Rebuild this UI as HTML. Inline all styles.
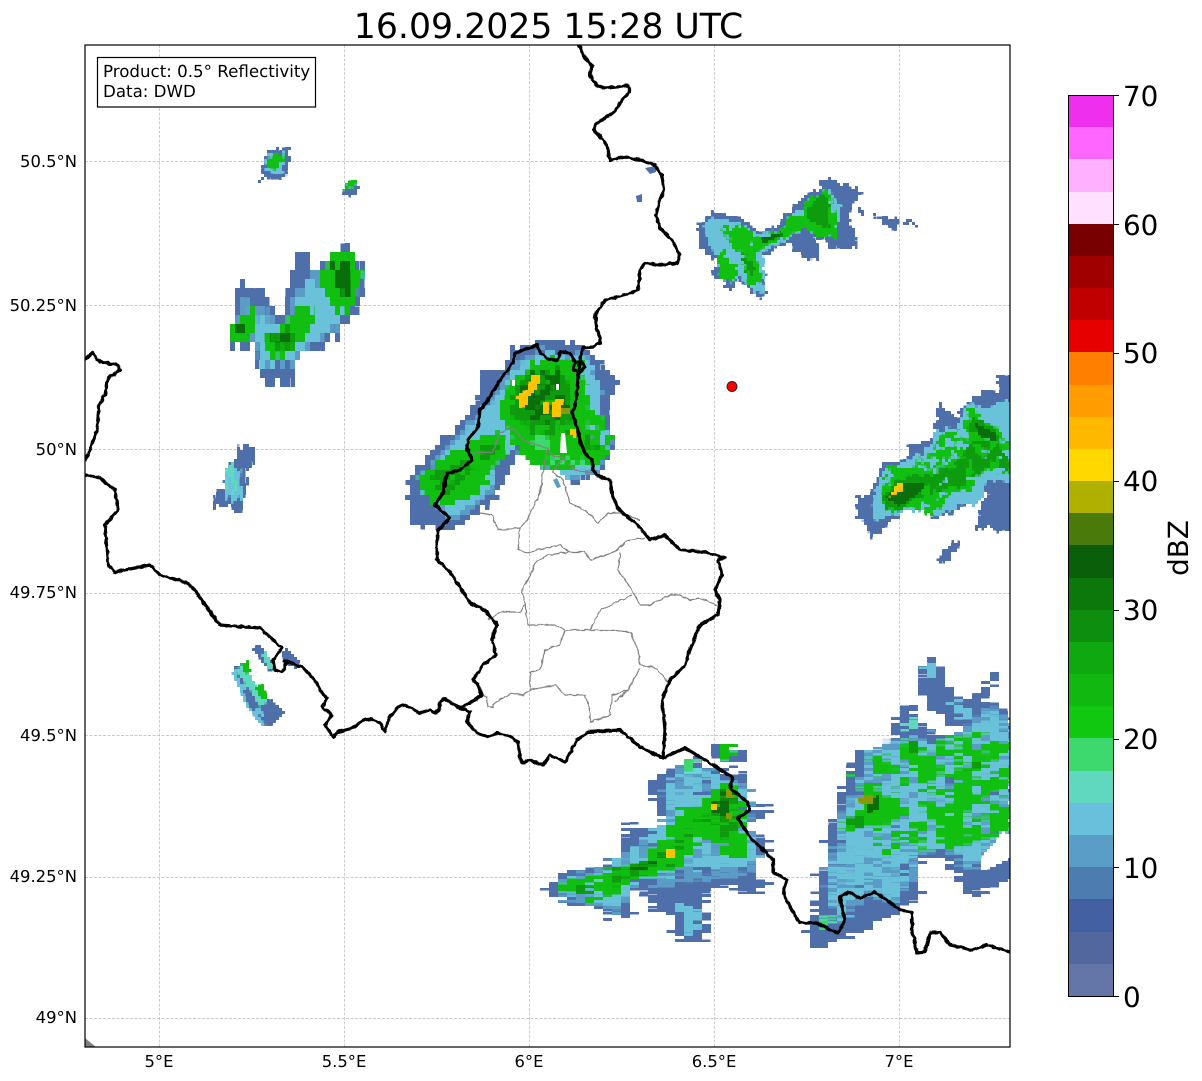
<!DOCTYPE html>
<html><head><meta charset="utf-8"><title>Radar</title>
<style>
html,body{margin:0;padding:0;background:#fff}
svg{display:block}
text{font-family:"DejaVu Sans","Liberation Sans",sans-serif;fill:#000;text-rendering:geometricPrecision}
.t{font-size:16.4px}
.c{font-size:27.8px}
.b{fill:#4e6fa9}.m{fill:#5a9cc6}.l{fill:#69c2da}.q{fill:#5fd8bf}
.g{fill:#10bf10}.a{fill:#3dd86e}.h{fill:#0e9c0e}.d{fill:#0a6e0a}.y{fill:#ffc400}.o{fill:#8a9a06}
.w{fill:#fff}
</style></head><body>
<svg width="1202" height="1081" viewBox="0 0 1202 1081" xmlns="http://www.w3.org/2000/svg">
<defs>
<clipPath id="ax"><rect x="85" y="45" width="925" height="1002"/></clipPath>
<filter id="fD" filterUnits="userSpaceOnUse" x="0" y="0" width="1202" height="1081" color-interpolation-filters="sRGB">
<feTurbulence type="fractalNoise" baseFrequency="0.14" numOctaves="2" seed="4" result="n"/>
<feDisplacementMap in="SourceGraphic" in2="n" scale="12" xChannelSelector="R" yChannelSelector="G"/>
</filter>
<filter id="fH" filterUnits="userSpaceOnUse" x="0" y="0" width="1202" height="1081" color-interpolation-filters="sRGB">
<feTurbulence type="fractalNoise" baseFrequency="0.035 0.28" numOctaves="2" seed="7" result="n"/>
<feDisplacementMap in="SourceGraphic" in2="n" scale="20" xChannelSelector="R" yChannelSelector="G"/>
</filter>
<filter id="fV" filterUnits="userSpaceOnUse" x="0" y="0" width="1202" height="1081" color-interpolation-filters="sRGB">
<feTurbulence type="fractalNoise" baseFrequency="0.25 0.04" numOctaves="2" seed="3" result="n"/>
<feDisplacementMap in="SourceGraphic" in2="n" scale="16" xChannelSelector="R" yChannelSelector="G"/>
</filter>
<filter id="fL" filterUnits="userSpaceOnUse" x="0" y="0" width="1202" height="1081" color-interpolation-filters="sRGB">
<feTurbulence type="fractalNoise" baseFrequency="0.22" numOctaves="1" seed="9" result="n"/>
<feDisplacementMap in="SourceGraphic" in2="n" scale="3.5" xChannelSelector="R" yChannelSelector="G"/>
</filter>
<!-- block mosaics -->
<filter id="p3" filterUnits="userSpaceOnUse" x="0" y="0" width="1202" height="1081" color-interpolation-filters="sRGB">
<feFlood x="1" y="1" width="1" height="1"/><feComposite x="0" y="0" width="3" height="3"/><feTile result="a"/>
<feComposite in="SourceGraphic" in2="a" operator="in"/><feMorphology operator="dilate" radius="1"/>
<feColorMatrix values="1 0 0 0 0 0 1 0 0 0 0 0 1 0 0 0 0 0 20 -9"/>
</filter>
<filter id="p5" filterUnits="userSpaceOnUse" x="0" y="0" width="1202" height="1081" color-interpolation-filters="sRGB">
<feFlood x="2" y="2" width="1" height="1"/><feComposite x="0" y="0" width="5" height="5"/><feTile result="a"/>
<feComposite in="SourceGraphic" in2="a" operator="in"/><feMorphology operator="dilate" radius="2"/>
<feColorMatrix values="1 0 0 0 0 0 1 0 0 0 0 0 1 0 0 0 0 0 20 -9"/>
</filter>
<filter id="pH" filterUnits="userSpaceOnUse" x="0" y="0" width="1202" height="1081" color-interpolation-filters="sRGB">
<feFlood x="4" y="1" width="1" height="1"/><feComposite x="0" y="0" width="9" height="3"/><feTile result="a"/>
<feComposite in="SourceGraphic" in2="a" operator="in"/><feMorphology operator="dilate" radius="4 1"/>
<feColorMatrix values="1 0 0 0 0 0 1 0 0 0 0 0 1 0 0 0 0 0 20 -9"/>
</filter>
<filter id="pV" filterUnits="userSpaceOnUse" x="0" y="0" width="1202" height="1081" color-interpolation-filters="sRGB">
<feFlood x="2" y="4" width="1" height="1"/><feComposite x="0" y="0" width="5" height="9"/><feTile result="a"/>
<feComposite in="SourceGraphic" in2="a" operator="in"/><feMorphology operator="dilate" radius="2 4"/>
<feColorMatrix values="1 0 0 0 0 0 1 0 0 0 0 0 1 0 0 0 0 0 20 -9"/>
</filter>
<!-- holes: keep part of a layer according to thresholded noise -->
<filter id="hL" filterUnits="userSpaceOnUse" x="0" y="0" width="1202" height="1081" color-interpolation-filters="sRGB">
<feTurbulence type="fractalNoise" baseFrequency="0.07 0.12" numOctaves="2" seed="11"/>
<feColorMatrix values="0 0 0 0 0 0 0 0 0 0 0 0 0 0 0 25 0 0 0 -10.500" result="k"/>
<feComposite in="SourceGraphic" in2="k" operator="in"/>
</filter>
<filter id="hG" filterUnits="userSpaceOnUse" x="0" y="0" width="1202" height="1081" color-interpolation-filters="sRGB">
<feTurbulence type="fractalNoise" baseFrequency="0.09" numOctaves="2" seed="21"/>
<feColorMatrix values="0 0 0 0 0 0 0 0 0 0 0 0 0 0 0 25 0 0 0 -9.500" result="k"/>
<feComposite in="SourceGraphic" in2="k" operator="in"/>
</filter>
<filter id="hP" filterUnits="userSpaceOnUse" x="0" y="0" width="1202" height="1081" color-interpolation-filters="sRGB">
<feTurbulence type="fractalNoise" baseFrequency="0.04 0.07" numOctaves="2" seed="5"/>
<feColorMatrix values="0 0 0 0 0 0 0 0 0 0 0 0 0 0 0 25 0 0 0 -12.750" result="k"/>
<feComposite in="SourceGraphic" in2="k" operator="in"/>
</filter>
</defs>

<text x="548.500" y="38" text-anchor="middle" style="font-size:34.7px">16.09.2025 15:28 UTC</text>

<!-- grid -->
<g stroke="#b8b8b8" stroke-width="0.7" stroke-dasharray="3 1.5" fill="none">
<path d="M159.500 45V1047M344.500 45V1047M529.500 45V1047M714.500 45V1047M899.500 45V1047"/>
<path d="M85 161.500H1010M85 305.500H1010M85 449.500H1010M85 593.500H1010M85 735.500H1010M85 877.500H1010M85 1018.500H1010"/>
</g>

<g clip-path="url(#ax)">
<!-- central cell -->
<g filter="url(#p5)"><g filter="url(#fD)">
<polygon class="b" points="408,483 433,447 453,430 477,400 483,367 500,373 513,347 550,340 583,344 600,363 620,382 608,400 613,447 603,473 573,482 533,462 523,445 500,490 480,513 450,530 410,523"/>
<polygon class="m" points="415,487 434,460 480,412 498,390 513,362 543,350 585,354 602,385 598,405 612,443 600,472 570,480 533,462 517,445 497,465 495,490 455,522 428,500"/>
<polygon class="l" points="420,487 437,463 480,417 500,393 513,370 543,353 583,358 600,387 597,405 610,443 597,470 570,477 533,460 517,443 493,463 493,487 453,517 430,497"/>
<polygon class="g" points="500,402 515,375 547,357 582,361 592,397 612,437 602,466 567,470 533,463 510,440"/>
<polygon class="g" points="416,478 445,456 480,438 505,428 505,455 490,470 480,496 445,506 428,499"/>
<g filter="url(#hG)"><polygon class="h" points="510,397 527,373 557,365 572,390 576,417 566,437 533,437 513,420"/>
<polygon class="h" points="432,478 463,458 478,470 447,494"/>
<polygon class="h" points="478,447 497,441 497,455 480,462"/>
<polygon class="h" points="585,430 600,445 595,455 583,445"/></g>
<g filter="url(#hL)"><polygon class="d" points="520,392 532,372 556,370 566,392 570,412 555,424 530,420"/></g>
<g filter="url(#hP)"><polygon class="l" points="585,380 600,395 605,440 595,455 585,420"/><polygon class="a" points="520,435 560,440 590,465 550,462"/></g>
</g></g>
<g filter="url(#p3)">
<polygon class="y" points="517,397 528,388 532,376 541,376 536,390 529,396 528,406 520,407"/>
<polygon class="y" points="553,401 563,399 561,414 557,418 553,416"/>
<polygon class="y" points="544,401 550,401 550,413 544,413"/>
<polygon class="y" points="570,427 578,433 576,438 571,434"/>
<polygon class="o" points="562,408 570,408 570,413 562,413"/>
</g>
<polygon class="w" points="561,433 565,433 567,453 560,453"/>
<polygon class="w" points="512,380 515,380 515,386 512,386"/>
<polygon class="w" points="556,384 559,384 559,390 556,390"/>
<polygon class="m" points="553,480 557,478 561,487 557,488"/>

<!-- north-west small -->
<g filter="url(#p3)"><g filter="url(#fD)">
<polygon class="b" points="258,180 268,152 290,146 290,165 282,180 265,178"/>
<polygon class="l" points="264,172 270,155 285,152 282,172"/>
<polygon class="g" points="267,168 273,154 284,155 279,170"/>
<polygon class="b" points="343,198 345,180 362,185 355,195"/>
<polygon class="g" points="344,190 348,180 356,182 352,192"/>
</g></g>

<!-- left cell -->
<g filter="url(#pV)"><g filter="url(#fV)">
<polygon class="b" points="233,347 238,280 250,288 263,290 270,310 283,320 287,297 293,258 305,250 310,270 327,263 348,241 365,270 365,290 349,323 335,342 315,354 295,352 294,384 265,382 253,347"/>
<polygon class="m" points="235,340 243,300 263,312 283,325 290,300 307,280 330,262 354,252 360,277 352,307 332,332 309,348 292,364 265,370 255,342"/>
<polygon class="l" points="235,337 243,313 263,320 280,327 290,307 307,290 330,270 352,260 358,277 350,307 330,330 307,345 290,360 263,367 257,340"/>
<polygon class="g" points="318,285 329,256 352,249 362,280 352,311 333,316 326,292"/>
<polygon class="g" points="284,317 297,301 318,313 308,337 287,354 273,370 264,333 286,326"/>
<polygon class="g" points="231,323 255,311 259,323 247,341 231,342"/>
<polygon class="d" points="331,263 352,263 356,287 345,302 333,277"/>
<polygon class="h" points="268,333 294,326 294,347 275,349"/>
<polygon class="d" points="270,335 290,331 288,345 275,345"/>
<polygon class="d" points="236,322 244,322 244,334 236,334"/>
</g></g>

<!-- north-east cell -->
<g filter="url(#p3)"><g filter="url(#fD)">
<polygon class="b" points="697,228 712,212 743,218 760,232 780,223 787,212 800,202 830,178 863,193 847,213 858,247 837,250 817,237 820,263 803,257 787,243 762,257 768,295 758,297 740,280 730,290 712,273 717,263 700,245"/>
<polygon class="l" points="703,225 713,218 740,223 758,235 783,230 790,218 807,203 830,190 840,207 838,235 818,237 803,228 787,240 763,252 765,292 758,293 743,277 730,283 717,270 713,250 707,237"/>
<polygon class="g" points="721,228 740,225 760,238 783,228 787,218 803,215 807,200 828,191 837,213 837,237 820,237 803,227 783,239 763,249 755,250 762,282 750,285 740,265 732,282 721,282 715,257 731,243"/>
<g filter="url(#hP)"><polygon class="l" points="725,235 755,245 750,270 725,270"/></g>
<polygon class="h" points="805,210 823,193 832,203 828,227 813,225"/>
<polygon class="h" points="742,250 754,262 752,278 745,270"/>
<polygon class="d" points="760,238 780,232 783,238 763,243"/>
<polygon class="b" points="850,200 866,212 862,214 848,203"/>
<polygon class="b" points="873,213 900,222 893,230 883,223"/>
<polygon class="b" points="907,220 918,227 916,229 906,222"/>
</g></g>
<polygon class="b" points="645,168 656,166 656,172 650,174"/>
<polygon class="b" points="636,196 642,194 642,202 637,202"/>

<!-- east cell -->
<g filter="url(#p3)"><g filter="url(#fD)">
<polygon class="b" points="853,502 873,492 882,463 908,457 910,445 933,438 938,407 945,407 955,420 968,402 983,390 998,390 998,375 1015,375 1015,537 1003,530 975,527 987,490 953,513 937,520 923,510 900,513 882,530 873,538 860,518"/>
<polygon class="l" points="873,503 883,470 910,460 930,447 935,430 957,427 968,403 987,408 1015,397 1015,483 987,480 977,507 963,503 940,517 923,510 900,513 877,520"/>
<g filter="url(#hL)"><polygon class="g" points="882,498 885,467 910,467 933,450 937,433 962,430 968,405 997,427 1015,447 1015,477 983,470 970,490 950,493 937,517 925,513 917,507 897,513 882,510"/></g>
<polygon class="g" points="885,495 890,470 915,468 932,470 940,500 915,505 895,510"/>
<g filter="url(#hG)">
<polygon class="h" points="882,497 900,478 927,476 955,462 975,440 1000,440 1012,470 985,468 965,485 943,490 920,497 900,510 885,507"/>
</g>
<polygon class="h" points="968,427 973,417 997,430 997,442 980,437"/>
<polygon class="b" points="939,558 953,540 959,547 947,563"/>
</g></g>
<g filter="url(#p3)">
<polygon class="d" points="885,498 900,484 925,484 918,494 900,506"/>
<polygon class="d" points="975,423 995,433 995,441 980,436"/>
<polygon class="y" points="889,498 898,483 903,482 903,490 893,495"/>
</g>

<!-- small mid-left -->
<g filter="url(#p3)"><g filter="url(#fV)">
<polygon class="b" points="214,492 225,490 227,465 242,443 252,445 253,468 246,470 246,495 240,512 222,505 214,508"/>
<polygon class="l" points="228,465 240,470 243,495 232,505 225,490"/>
<polygon class="q" points="226,462 232,462 238,490 233,495"/>
</g></g>

<!-- south-west strip -->
<g filter="url(#p3)">
<polygon class="l" points="232,672 241,665 258,692 282,716 262,727 246,705"/>
<g filter="url(#hL)"><polygon class="b" points="234,665 240,660 258,690 285,712 268,728 248,705"/></g>
<polygon class="q" points="236,670 246,662 252,680 268,700 262,710 250,690"/>
<polygon class="g" points="241,664 248,661 251,672 245,675"/>
<polygon class="g" points="255,688 262,684 268,698 260,698"/>
<polygon class="b" points="253,650 259,644 275,666 270,672"/>
<polygon class="q" points="262,655 266,652 274,668 269,670"/>
<polygon class="b" points="281,655 287,648 300,662 296,668 290,666"/>
<polygon class="b" points="260,706 272,700 281,714 268,727"/>
</g>

<!-- south cell -->
<g filter="url(#pH)"><g filter="url(#fH)">
<polygon class="b" points="542,890 563,873 597,867 623,853 625,825 657,828 670,823 653,803 648,787 663,772 680,767 680,758 697,757 713,770 750,773 743,803 777,813 743,827 770,847 757,857 757,880 767,887 750,893 723,887 703,890 705,917 713,930 703,942 673,938 677,917 650,910 653,893 633,893 630,920 590,907 550,897"/>
<polygon class="b" points="707,748 720,742 743,750 743,762 720,763"/>
<g filter="url(#hG)"><polygon class="m" points="550,890 567,875 597,872 617,855 630,850 657,830 667,812 663,790 670,775 690,760 697,768 723,775 750,785 752,827 760,860 740,878 697,880 673,885 637,885 620,912 590,905 565,897"/></g>
<g filter="url(#hL)"><polygon class="l" points="550,890 567,877 597,877 617,857 630,853 657,833 667,817 663,797 670,780 690,763 697,772 723,777 743,787 747,827 757,857 737,870 697,870 673,877 637,877 620,907 590,900 565,895"/></g>
<polygon class="l" points="677,903 697,907 703,933 687,933"/>
<polygon class="g" points="552,890 567,878 590,876 596,902 580,895"/>
<polygon class="g" points="598,873 623,868 647,856 665,835 678,811 703,801 727,778 739,793 745,807 742,830 749,859 727,859 720,845 700,839 685,859 675,872 630,879 623,892 598,899"/>
<polygon class="g" points="718,746 735,746 735,760 722,760"/>
<polygon class="a" points="682,760 695,760 695,770 682,770"/>
<g filter="url(#hG)">
<polygon class="h" points="610,875 630,867 657,857 673,843 687,827 710,810 727,787 738,803 733,827 723,843 717,827 700,823 687,843 670,863 643,873 615,885"/>
<polygon class="h" points="575,885 590,880 594,897 580,895"/>
</g>
<polygon class="d" points="630,870 655,862 668,850 650,870"/>
<polygon class="d" points="708,812 730,790 734,800 728,815"/>
</g></g>
<g filter="url(#p3)">
<polygon class="y" points="667,849 676,849 676,857 667,857"/>
<polygon class="y" points="710,803 717,803 717,811 710,811"/>
<polygon class="o" points="725,813 732,813 732,818 725,818"/>
<polygon class="o" points="725,790 732,790 734,798 727,798"/>
</g>

<!-- south-east large cell -->
<g filter="url(#pH)"><g filter="url(#fH)">
<polygon class="b" points="808,930 813,907 818,877 827,870 827,840 832,822 843,787 858,750 890,747 895,715 913,705 922,730 937,733 967,730 947,722 930,703 918,690 922,663 940,655 943,683 970,702 995,673 993,687 980,703 997,707 1015,718 1015,878 967,897 960,880 943,860 915,863 923,892 900,910 863,930 820,947 808,938"/>
<g filter="url(#hG)"><polygon class="m" points="833,912 824,870 840,838 834,822 855,790 867,750 895,740 917,733 950,736 977,718 993,708 1015,722 1015,835 985,855 973,872 947,852 917,852 917,875 900,900 850,905 845,930"/></g>
<g filter="url(#hL)"><polygon class="l" points="833,907 828,870 843,840 837,823 857,793 870,753 897,743 917,737 950,740 977,723 993,712 1015,727 1015,827 985,850 973,867 947,847 913,847 913,870 897,897 850,900 847,923"/></g>
<polygon class="l" points="925,670 938,660 935,675 928,680"/>
<polygon class="l" points="950,700 975,712 965,722 955,715"/>
<g filter="url(#hP)"><polygon class="g" points="850,775 915,745 1015,725 1015,830 960,850 900,845 845,835"/></g>
<polygon class="g" points="868,757 885,752 892,775 875,778"/>
<polygon class="g" points="903,735 918,743 918,755 910,755"/>
<polygon class="g" points="920,763 938,757 943,773 930,788 920,783"/>
<polygon class="g" points="840,827 857,813 878,793 898,800 902,817 880,823 857,832"/>
<polygon class="g" points="950,797 973,792 978,803 960,817 950,810"/>
<polygon class="g" points="935,817 960,813 970,840 950,853 938,840"/>
<polygon class="g" points="963,740 973,747 990,763 973,772 967,763"/>
<polygon class="g" points="952,750 960,753 963,767 953,765"/>
<polygon class="g" points="980,783 1000,773 1003,787 987,795"/>
<polygon class="g" points="993,807 1015,810 1015,823 1002,823"/>
<polygon class="g" points="895,832 917,830 910,840 897,840"/>
<polygon class="g" points="883,850 897,843 897,853 883,857"/>
<polygon class="a" points="820,920 835,918 830,930 820,930"/>
<polygon class="q" points="905,720 918,718 915,730 905,732"/>
<polygon class="h" points="848,820 863,812 863,830 850,827"/>
<polygon class="h" points="908,738 916,743 916,752 910,752"/>
<polygon class="h" points="972,755 982,762 975,770 970,765"/>
</g></g>
<g filter="url(#p3)">
<polygon class="d" points="866,800 880,795 880,810 868,812"/>
<polygon class="o" points="858,798 872,795 873,803 860,803"/>
<polygon class="w" points="980,860 1003,832 1010,838 1010,858 990,868 980,872"/>
</g>

<polygon points="85,1038 96,1047 85,1047" fill="#808080"/>

<!-- province lines -->
<g fill="none" stroke="#808080" stroke-width="1.200" stroke-linejoin="round" filter="url(#fL)">
<path d="M472,453 493,452 500,433 513,428 523,440 547,448 552,455 563,458 575,470 592,473"/>
<path d="M480,513 492,515 498,530 520,528 527,520 540,493 543,472 547,448"/>
<path d="M552,472 563,480 570,503 587,512 598,523 608,513 620,513 640,520"/>
<path d="M552,472 563,458"/>
<path d="M520,528 518,550 525,553 545,548 560,545 570,552 585,552 590,560 615,552 628,540 645,538"/>
<path d="M620,552 618,570 632,590 640,605 650,605 670,595 680,595 690,600 700,598 717,605"/>
<path d="M570,552 548,555 535,563 530,575 522,590 525,605 520,612 500,612 488,620"/>
<path d="M525,605 528,625 555,625 565,630 590,630 600,610 632,595"/>
<path d="M590,630 610,630 630,632 638,650 640,665 655,668 665,678 668,682"/>
<path d="M565,630 560,645 545,650 540,670 530,672 530,690 555,685 565,695 585,695 590,710 590,722 610,715 612,695 628,690 640,668"/>
<path d="M483,695 487,698 488,707 493,707 495,702 513,693 523,695 530,690"/>
<path d="M628,690 615,702"/>
</g>

<!-- national borders -->
<g fill="none" stroke="#000" stroke-width="3.200" stroke-linejoin="round" stroke-linecap="round" filter="url(#fL)">
<path d="M579,45 585,58 592,66 590,75 596,85 605,88 628,86 630,92 622,100 614,112 596,124 594,130 605,142 608,150 610,160 625,157 640,160 655,165 662,176 664,190 660,200 656,215 660,228 672,240 680,255 678,263 660,265 645,263 640,270 638,290 622,296 605,300 595,315 597,330 598,330 600,343 593,347 583,348 580,360 575,363 573,370 580,372 585,367 580,360 578,377 577,390 575,407 572,413 577,427 580,440 585,453 592,460 593,470 597,475 610,480 612,493 617,507 627,517 638,525 650,540 665,535 680,550 705,552 725,558 718,560 722,575 715,590 720,600 718,615 700,625 690,650 685,665 670,680 662,700 665,730 663,758"/>
<path d="M575,362 570,353 560,352 558,360 550,360 540,353 537,345 515,353 513,363 500,380 490,397 480,410 478,427 468,440 467,448 472,460 460,470 447,473 443,493 435,505 450,518 438,530 437,540 437,560 450,572 462,590 470,603 485,610 497,625 492,640 496,655 483,665 473,680 478,685 482,695 470,703 460,708"/>
<path d="M85,360 92,353 100,362 118,365 120,370 108,378 105,395 99,405 97,430 90,450 85,460"/>
<path d="M85,475 100,478 115,490 118,510 105,525 108,565 115,572 135,568 150,565 160,575 185,582 195,590 205,605 220,625 245,627 260,628 282,648 273,660 275,670 282,672 287,663 285,661 302,667 315,680 322,693 327,698 322,707 332,715 325,725 333,737 338,732 353,728 363,720 372,719 380,723 385,732 389,718 398,707 403,705 412,708 419,713 430,710 435,713 439,710 440,702 445,699 460,708 470,712 467,722 477,733 488,737 497,733 510,736 518,742 520,758 523,763 530,760 543,765 550,755 565,762 577,740 588,732 620,730 640,747 663,758 685,748 697,755 733,778 730,788 747,802 750,810 738,818 750,837 773,860 773,872 787,880 783,893 792,910 800,923 817,923 838,933 845,920 840,897 848,892 860,898 875,892 887,900 900,910 912,912 912,930 917,953 925,952 930,933 940,932 950,945 972,950 987,945 1010,952"/>
</g>
</g>

<!-- station dot -->
<circle cx="732" cy="386.500" r="5" fill="#f00" stroke="#222" stroke-width="0.9"/>

<!-- legend -->
<rect x="97.500" y="57.500" width="218" height="49.500" fill="#fff" stroke="#000" stroke-width="1.200"/>
<text x="103" y="77" style="font-size:16.67px">Product: 0.5° Reflectivity</text>
<text x="103" y="97" style="font-size:16.67px">Data: DWD</text>

<rect x="85" y="45" width="925" height="1002" fill="none" stroke="#000" stroke-width="1.200"/>

<!-- axis labels -->
<g class="t" text-anchor="end">
<text x="77" y="167">50.5°N</text>
<text x="77" y="311">50.25°N</text>
<text x="77" y="455">50°N</text>
<text x="77" y="598">49.75°N</text>
<text x="77" y="741">49.5°N</text>
<text x="77" y="882">49.25°N</text>
<text x="77" y="1023">49°N</text>
</g>
<g class="t" text-anchor="middle">
<text x="159" y="1067">5°E</text>
<text x="344" y="1067">5.5°E</text>
<text x="529" y="1067">6°E</text>
<text x="714" y="1067">6.5°E</text>
<text x="899" y="1067">7°E</text>
</g>

<!-- colorbar -->
<g shape-rendering="crispEdges">
<rect x="1068" y="95" width="45" height="33" fill="#ee30ee"/>
<rect x="1068" y="127" width="45" height="33" fill="#ff66ff"/>
<rect x="1068" y="159" width="45" height="33" fill="#ffb0ff"/>
<rect x="1068" y="192" width="45" height="33" fill="#ffe0ff"/>
<rect x="1068" y="224" width="45" height="33" fill="#780000"/>
<rect x="1068" y="256" width="45" height="33" fill="#a00000"/>
<rect x="1068" y="288" width="45" height="33" fill="#c00000"/>
<rect x="1068" y="320" width="45" height="33" fill="#e60000"/>
<rect x="1068" y="352" width="45" height="33" fill="#ff8000"/>
<rect x="1068" y="385" width="45" height="33" fill="#ff9c00"/>
<rect x="1068" y="417" width="45" height="33" fill="#ffb800"/>
<rect x="1068" y="449" width="45" height="33" fill="#ffd800"/>
<rect x="1068" y="481" width="45" height="33" fill="#b0b000"/>
<rect x="1068" y="513" width="45" height="33" fill="#4a7a0a"/>
<rect x="1068" y="545" width="45" height="33" fill="#0a600a"/>
<rect x="1068" y="578" width="45" height="33" fill="#0c780c"/>
<rect x="1068" y="610" width="45" height="33" fill="#0e8e0e"/>
<rect x="1068" y="642" width="45" height="33" fill="#10a810"/>
<rect x="1068" y="674" width="45" height="33" fill="#10b810"/>
<rect x="1068" y="706" width="45" height="33" fill="#10c810"/>
<rect x="1068" y="738" width="45" height="33" fill="#3dd86e"/>
<rect x="1068" y="771" width="45" height="33" fill="#60d8c0"/>
<rect x="1068" y="803" width="45" height="33" fill="#68c0dc"/>
<rect x="1068" y="835" width="45" height="33" fill="#5a9dc6"/>
<rect x="1068" y="867" width="45" height="33" fill="#4d7cb1"/>
<rect x="1068" y="899" width="45" height="33" fill="#4360a2"/>
<rect x="1068" y="932" width="45" height="33" fill="#53679f"/>
<rect x="1068" y="964" width="45" height="32" fill="#6476a8"/>
</g>
<rect x="1068.500" y="95.500" width="45" height="901" fill="none" stroke="#000" stroke-width="1"/>
<path d="M1113 95.500h6M1113 224.500h6M1113 353.500h6M1113 481.500h6M1113 610.500h6M1113 739.500h6M1113 867.500h6M1113 996.500h6" stroke="#000" stroke-width="1"/>
<g class="c">
<text x="1123" y="106">70</text>
<text x="1123" y="235">60</text>
<text x="1123" y="363">50</text>
<text x="1123" y="491">40</text>
<text x="1123" y="620">30</text>
<text x="1123" y="749">20</text>
<text x="1123" y="878">10</text>
<text x="1123" y="1007">0</text>
</g>
<text class="c" transform="translate(1188 548) rotate(-90)" text-anchor="middle">dBZ</text>
</svg>
</body></html>
